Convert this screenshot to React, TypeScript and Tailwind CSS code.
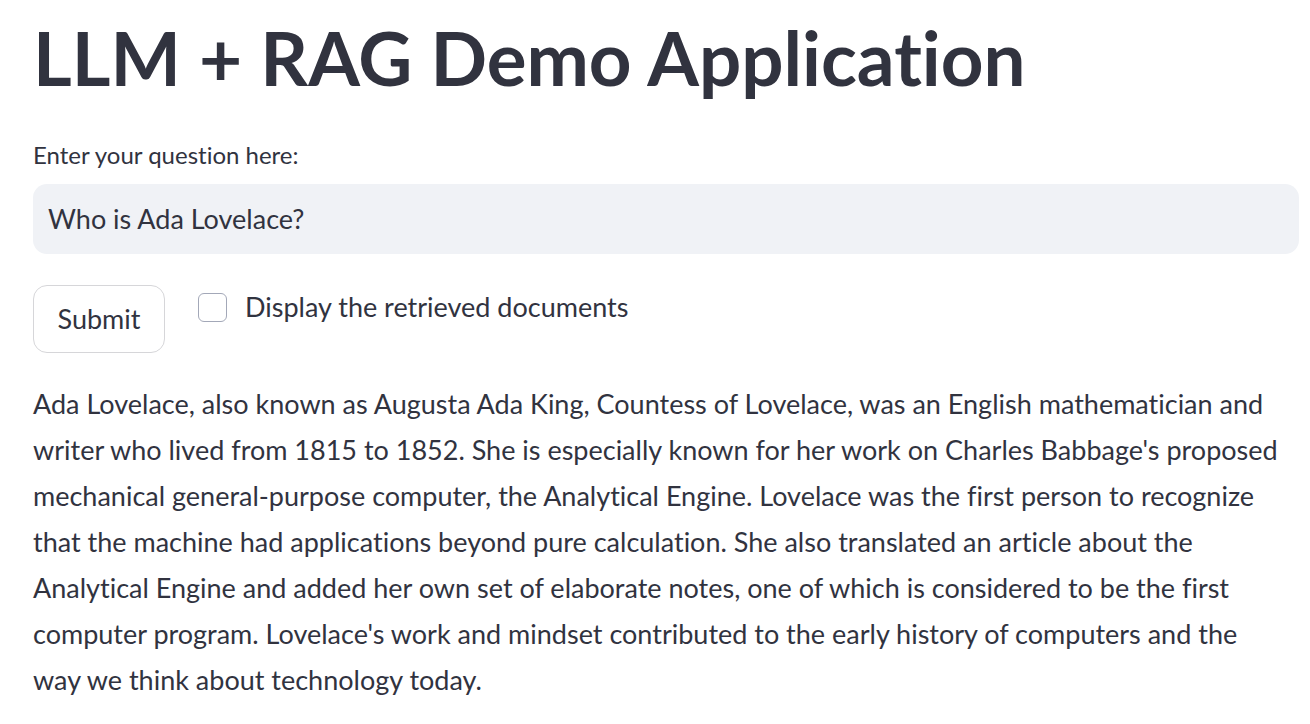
const ANSWER_LINES = [
  "Ada Lovelace, also known as Augusta Ada King, Countess of Lovelace, was an English mathematician and",
  "writer who lived from 1815 to 1852. She is especially known for her work on Charles Babbage's proposed",
  "mechanical general-purpose computer, the Analytical Engine. Lovelace was the first person to recognize",
  "that the machine had applications beyond pure calculation. She also translated an article about the",
  "Analytical Engine and added her own set of elaborate notes, one of which is considered to be the first",
  "computer program. Lovelace's work and mindset contributed to the early history of computers and the",
  "way we think about technology today.",
];

export default function App() {
  return (
    <div
      className="min-h-screen bg-white px-[33px] text-[#31333f] [font-variant-ligatures:none]"
      style={{ fontFamily: 'Lato, "Noto Sans", sans-serif' }}
    >
      {/* Title */}
      <h1 className="pt-[12px] text-[74.5px] font-bold leading-[90px]">
        LLM + RAG Demo Application
      </h1>

      {/* Question input */}
      <div className="mt-[33px]">
        <label className="block text-[24px] leading-[40px]">Enter your question here:</label>
        <div className="mt-[9px] flex h-[70px] w-[1266px] items-center rounded-[14px] bg-[#f0f2f6] px-[15px]">
          <input
            type="text"
            defaultValue="Who is Ada Lovelace?"
            className="w-full bg-transparent text-[27px] text-[#31333f] outline-none"
          />
        </div>
      </div>

      {/* Controls */}
      <div className="mt-[31px] flex items-start gap-[33px]">
        <button className="flex h-[68px] w-[132px] items-center justify-center rounded-[14px] border border-[#d6d6d9] bg-white text-[27px]">
          Submit
        </button>
        <label className="mt-[7px] flex items-center gap-[18px]">
          <span className="block h-[29px] w-[29px] rounded-[6px] border border-[#a3a8b8] bg-white" />
          <span className="text-[27px] leading-[30px]">Display the retrieved documents</span>
        </label>
      </div>

      {/* Answer */}
      <p className="mt-[28px] w-[1266px] whitespace-nowrap text-[27px] leading-[46px]">
        {ANSWER_LINES.map((line, i) => (
          <span key={i} className="block">
            {line}
          </span>
        ))}
      </p>
    </div>
  );
}
